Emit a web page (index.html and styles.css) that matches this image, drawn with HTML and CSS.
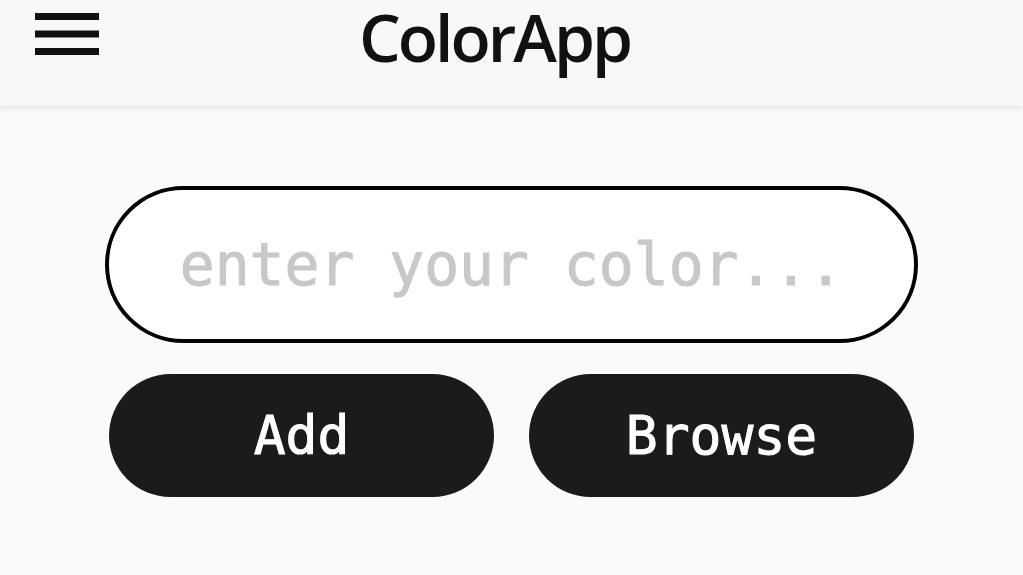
FILE: index.html
```html
<!DOCTYPE html>
<html lang="en">
<head>
<meta charset="utf-8">
<title>ColorApp</title>
<link rel="stylesheet" href="styles.css">
</head>
<body>
  <header class="topbar">
    <button class="menu-btn" aria-label="Menu">
      <svg width="64" height="42" viewBox="0 0 64 42" aria-hidden="true">
        <rect x="0" y="0" width="64" height="7" fill="#111"/>
        <rect x="0" y="17.5" width="64" height="7" fill="#111"/>
        <rect x="0" y="35" width="64" height="7" fill="#111"/>
      </svg>
    </button>
    <h1 class="title">ColorApp</h1>
  </header>
  <main class="content">
    <input class="color-input" type="text" placeholder="enter your color...">
    <div class="actions">
      <button class="pill-btn">Add</button>
      <button class="pill-btn">Browse</button>
    </div>
  </main>
</body>
</html>
```
FILE: styles.css
```css
html, body {
  margin: 0;
  padding: 0;
}
body {
  background: #fafafa;
  height: 575px;
  overflow: hidden;
  font-family: "Open Sans", sans-serif;
}
.topbar {
  height: 106px;
  background: #f7f9f6;
  box-shadow: 0 2px 6px rgba(0, 0, 0, 0.10);
  display: flex;
  align-items: flex-start;
  padding-left: 35px;
  box-sizing: border-box;
  position: relative;
  z-index: 1;
}
.menu-btn {
  border: 0;
  background: none;
  padding: 0;
  margin-top: 13px;
  width: 64px;
  height: 42px;
  display: block;
  flex-shrink: 0;
}
.menu-btn svg {
  display: block;
}
.title {
  flex-shrink: 0;
  white-space: nowrap;
  margin: 0 0 0 250px;
  padding: 0 10px;
  font-size: 66px;
  font-weight: 600;
  line-height: 72px;
  letter-spacing: -3px;
  color: #111;
}
.content {
  width: 813px;
  margin: 80px auto 0;
}
.color-input {
  display: block;
  width: 813px;
  height: 157px;
  box-sizing: border-box;
  border: 4px solid #000;
  border-radius: 80px;
  background: #fff;
  font-family: "DejaVu Sans Mono", monospace;
  font-size: 58px;
  text-align: center;
  color: #222;
  outline: none;
  padding: 0 20px;
  margin: 0;
}
.color-input::placeholder {
  color: #c8c8c8;
  -webkit-text-stroke: 1px #c8c8c8;
}
.actions {
  display: flex;
  gap: 35px;
  padding: 0 4px;
  margin-top: 31px;
}
.pill-btn {
  flex: 1;
  height: 123px;
  border: 0;
  border-radius: 62px;
  background: #1b1b1b;
  color: #fff;
  font-family: "DejaVu Sans Mono", monospace;
  font-size: 53px;
  -webkit-text-stroke: 1px #fff;
  padding: 0;
}
```
